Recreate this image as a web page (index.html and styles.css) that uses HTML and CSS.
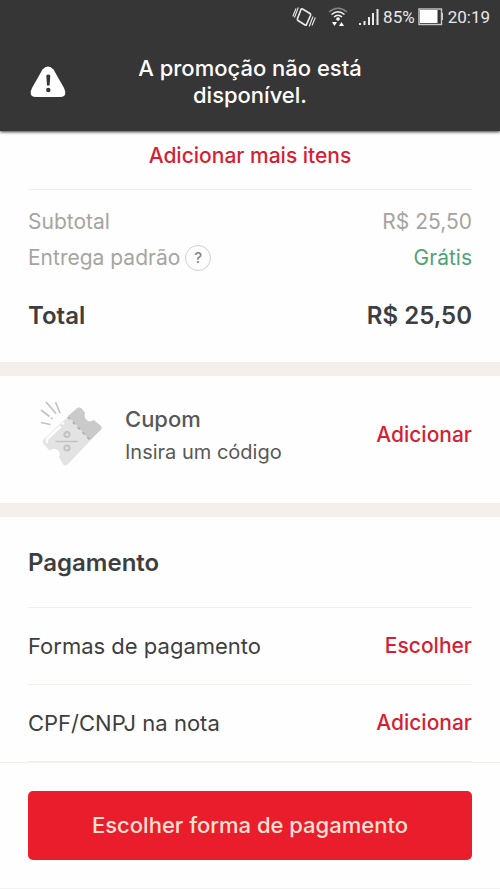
FILE: index.html
```html
<!DOCTYPE html>
<html lang="pt-BR">
<head>
<meta charset="utf-8">
<meta name="viewport" content="width=device-width, initial-scale=1">
<title>Sacola</title>
<link rel="stylesheet" href="styles.css">
</head>
<body>
<header class="top">
  <div class="status">
    <svg class="status-vibrate" width="24" height="22" viewBox="0 0 24 22" fill="none" stroke="#e8e8e8" stroke-width="1.700" stroke-linejoin="round" aria-hidden="true">
      <path d="M10.500 3Q9.500 2.500 9 3.500L5.500 12.500Q5 13.800 6 14.500L13 19Q14 19.500 14.500 18.500L18.500 9.500Q19 8.300 18 7.500Z"/>
      <path d="M6.300 1.500 2.500 11.500M4 2.500 .8 10.500M21 10.500 17.200 20.500M23.300 11.500 20 19.500" stroke-width="1.100"/>
    </svg>
    <svg class="status-wifi" width="20" height="22" viewBox="0 0 20 22" fill="none" stroke="#f2f2f2" stroke-width="1.500" aria-hidden="true">
      <path d="M1 6Q10-1.500 19 6" stroke="#858585"/>
      <path d="M3.500 8.500Q10 3 16.500 8.500M6 11Q10 7.500 14 11"/>
      <circle cx="10" cy="13" r="1.800" fill="#fff" stroke="none"/>
      <path d="M4 16h5l-2.500 4zM11 20h5l-2.500-4z" fill="#fff" stroke="none"/>
    </svg>
    <svg class="status-signal" width="20" height="18" viewBox="0 0 20 18" fill="#e8e8e8" aria-hidden="true">
      <path d="M0 15h2v2H0zM4.500 13h2v4h-2zM9 9h2v8H9zM13 5h2v12h-2zM17.500 1h2v16h-2z"/>
    </svg>
    <span class="status-percent">85%</span>
    <svg class="status-battery" width="26" height="18" viewBox="0 0 26 18" aria-hidden="true">
      <rect x="1" y="1" width="22.500" height="15.500" fill="#343434" stroke="#c8c8c8" stroke-width="1.400"/>
      <path d="M2 2h17.500v13H2z" fill="#fff"/>
      <path d="M23 5h2v7h-2z" fill="#c8c8c8"/>
    </svg>
    <time>20:19</time>
  </div>
  <div class="notice" role="alert">
    <svg width="36" height="32" viewBox="0 0 36 32" aria-hidden="true">
      <path d="M12.500 3.500Q18-2.500 23.500 3.500L34 22Q38 31 30 31H6Q-2 31 2 22Z" fill="#fff"/>
      <path d="M16.300 9.500Q18.300 7.500 20.300 9.500L19.600 19.500H17Z" fill="#363636"/>
      <circle cx="18.300" cy="24" r="2.200" fill="#363636"/>
    </svg>
    <p>A promoção não está disponível.</p>
  </div>
</header>
<main>
  <section class="summary">
    <a class="more" href="#itens">Adicionar mais itens</a>
    <dl class="costs">
      <div class="cost"><dt>Subtotal</dt><dd>R$ 25,50</dd></div>
      <div class="cost"><dt>Entrega padrão <button class="help" type="button" aria-label="Ajuda sobre a entrega">?</button></dt><dd class="free">Grátis</dd></div>
      <div class="cost total"><dt>Total</dt><dd>R$ 25,50</dd></div>
    </dl>
  </section>
  <section class="coupon">
    <svg class="ticket" width="64" height="68" viewBox="0 0 64 68" aria-hidden="true">
      <path d="M37.500 7Q40 5.500 42 8l3 4c-2 4 2 10 7 8 2-1 2-1 4 1l5 4q1.500 2-.5 4L28 63q-3 3-5 0l-4-7c3-4-3-11-8-7q-2 1-3-1l-5-6q-1-2 1-4Z" fill="#e3e3e3"/>
      <path d="M28 15 37.500 7Q40 5.500 42 8l3 4c-2 4 2 10 7 8 2-1 2-1 4 1l5 4q1.500 2-.5 4L50 39Z" fill="#cacaca"/>
      <path d="M28 16 50 39" fill="none" stroke="#b0b0b0" stroke-width="1.800" stroke-dasharray="3 4"/>
      <path d="M7 41Q6 38 9 36L20 26" fill="none" stroke="#fff" stroke-width="2.400" stroke-linecap="round"/>
      <circle cx="23" cy="22.500" r="1.200" fill="#fff"/>
      <g fill="none" stroke="#c2c2c2">
        <path d="M15.500 40.500h22" stroke-width="1.500"/>
        <circle cx="27" cy="33.500" r="2.600" stroke-width="2"/>
        <circle cx="27" cy="47" r="2.600" stroke-width="2"/>
        <path d="m6 1 10 11.500M15.500 1 20 12M1 9l8.500 6.500M11 16.500l1.500 1.500M1 21.500l9.500 2" stroke-width="1.700"/>
      </g>
    </svg>
    <div class="coupon-text">
      <h2>Cupom</h2>
      <p>Insira um código</p>
    </div>
    <button class="action" type="button">Adicionar</button>
  </section>
  <section class="payment">
    <h2>Pagamento</h2>
    <div class="option"><span>Formas de pagamento</span><button class="action" type="button">Escolher</button></div>
    <div class="option"><span>CPF/CNPJ na nota</span><button class="action" type="button">Adicionar</button></div>
  </section>
</main>
<footer class="checkout">
  <button class="submit" type="button">Escolher forma de pagamento</button>
</footer>
</body>
</html>
```
FILE: styles.css
```css
* {
  box-sizing: border-box;
}

body {
  margin: 0;
  min-height: 100vh;
  display: flex;
  flex-direction: column;
  background: #fefefe;
  color: #3e3e3e;
  font: 21px/28px Inter, "Liberation Sans", sans-serif;
}

h2, p, dl, dt, dd {
  margin: 0;
}

button {
  border: 0;
  padding: 0;
  background: none;
  font: inherit;
  cursor: pointer;
}

.top {
  background: #363636;
  color: #fff;
  box-shadow: 0 1px 3px #363636;
}

.status {
  display: flex;
  justify-content: flex-end;
  align-items: center;
  height: 34px;
  padding-right: 10px;
  font: 17px/20px Roboto, sans-serif;
  color: #e8e8e8;
}

.status-vibrate {
  margin-right: 12px;
}

.status-wifi {
  margin-right: 11px;
}

.status-signal,
.status-battery {
  margin-right: 4px;
}

.status-percent {
  margin-right: 3px;
}

.notice {
  display: grid;
  grid-template-columns: 36px 1fr 36px;
  align-items: center;
  padding: 21px 30px 22px;
}

.notice p {
  max-width: 240px;
  justify-self: center;
  text-align: center;
  font-size: 22px;
  line-height: 27px;
  font-weight: 500;
}

.summary {
  padding: 0 28px 32px;
}

.more {
  display: block;
  padding: 11px 0 19px;
  border-bottom: 1px solid #ececea;
  color: #d41f34;
  font-weight: 500;
  text-align: center;
  text-decoration: none;
}

.costs {
  padding-top: 18px;
}

.cost {
  display: flex;
  justify-content: space-between;
  align-items: center;
  margin-bottom: 8px;
  color: #a6a4a0;
}

.cost dt {
  display: flex;
  align-items: center;
  gap: 5px;
}

.help {
  width: 26px;
  height: 26px;
  border: 1px solid #cfcfcf;
  border-radius: 50%;
  color: #858585;
  font-size: 15px;
  line-height: 24px;
  font-weight: 500;
}

.cost .free {
  color: #4fa374;
}

.total {
  margin: 30px 0 0;
  color: #3e3e3e;
  font-size: 24px;
  font-weight: 600;
}

.coupon {
  display: flex;
  align-items: center;
  border: solid #f4efeb;
  border-width: 14px 0;
  padding: 25px 28px 34px 40px;
}

.coupon-text {
  flex: 1;
  margin-left: 21px;
  color: #585858;
}

.coupon-text h2 {
  margin-bottom: 5px;
  font-size: 22px;
  font-weight: 500;
}

.coupon-text p {
  font-size: 20px;
}

.action {
  color: #d41f34;
  font-weight: 500;
}

.payment {
  padding: 0 28px;
}

.payment h2 {
  padding: 32px 0 30px;
  border-bottom: 1px solid #f0f0ee;
  font-size: 24px;
  font-weight: 600;
}

.option {
  display: flex;
  justify-content: space-between;
  align-items: center;
  padding: 24px 0;
  border-bottom: 1px solid #f0f0ee;
}

.option span {
  font-size: 22px;
}

.checkout {
  border-top: 1px solid #f0f0ea;
  padding: 28px 28px 28px;
  border-bottom: 1px solid #f2f2f2;
}

.submit {
  width: 100%;
  padding: 20px 0 21px;
  border-radius: 5px;
  background: #ea1d2c;
  color: #ffe0d4;
  font-size: 22px;
  font-weight: 500;
}
```
